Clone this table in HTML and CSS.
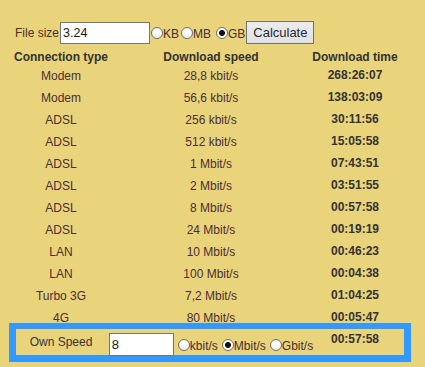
FILE: index.html
```html
<!DOCTYPE html>
<html>
<head>
<meta charset="utf-8">
<link rel="stylesheet" href="styles.css">
</head>
<body>
<form class="size-form">
  <span class="lbl">File size</span><input class="txt size-input" type="text" value="3.24"><input class="radio r1" type="radio" name="u"><span class="opt">KB</span><input class="radio r2" type="radio" name="u"><span class="opt">MB</span><input class="radio r3" type="radio" name="u" checked><span class="opt">GB</span><button type="button" class="btn">Calculate</button>
</form>
<div class="table">
  <div class="row head"><div class="cell">Connection type</div><div class="cell">Download speed</div><div class="cell">Download time</div></div>
  <div class="row"><div class="cell">Modem</div><div class="cell">28,8 kbit/s</div><div class="cell time">268:26:07</div></div>
  <div class="row"><div class="cell">Modem</div><div class="cell">56,6 kbit/s</div><div class="cell time">138:03:09</div></div>
  <div class="row"><div class="cell">ADSL</div><div class="cell">256 kbit/s</div><div class="cell time">30:11:56</div></div>
  <div class="row"><div class="cell">ADSL</div><div class="cell">512 kbit/s</div><div class="cell time">15:05:58</div></div>
  <div class="row"><div class="cell">ADSL</div><div class="cell">1 Mbit/s</div><div class="cell time">07:43:51</div></div>
  <div class="row"><div class="cell">ADSL</div><div class="cell">2 Mbit/s</div><div class="cell time">03:51:55</div></div>
  <div class="row"><div class="cell">ADSL</div><div class="cell">8 Mbit/s</div><div class="cell time">00:57:58</div></div>
  <div class="row"><div class="cell">ADSL</div><div class="cell">24 Mbit/s</div><div class="cell time">00:19:19</div></div>
  <div class="row"><div class="cell">LAN</div><div class="cell">10 Mbit/s</div><div class="cell time">00:46:23</div></div>
  <div class="row"><div class="cell">LAN</div><div class="cell">100 Mbit/s</div><div class="cell time">00:04:38</div></div>
  <div class="row"><div class="cell">Turbo 3G</div><div class="cell">7,2 Mbit/s</div><div class="cell time">01:04:25</div></div>
  <div class="row"><div class="cell">4G</div><div class="cell">80 Mbit/s</div><div class="cell time">00:05:47</div></div>
  <div class="row own">
    <div class="cell own-label">Own Speed</div>
    <div class="cell own-controls"><div class="group"><input class="txt own-input" type="text" value="8"><input class="radio o1" type="radio" name="s"><span class="opt">kbit/s</span><input class="radio o2" type="radio" name="s" checked><span class="opt">Mbit/s</span><input class="radio o3" type="radio" name="s"><span class="opt">Gbit/s</span></div></div>
    <div class="cell time own-time">00:57:58</div>
  </div>
</div>
</body>
</html>
```
FILE: styles.css
```css
html, body {
  background: #e9d37b;
}
body {
  margin: 8px;
  font-family: "Liberation Sans", Arial, sans-serif;
  font-size: 12px;
  color: #4b2f2f;
}
.size-form {
  display: flex;
  align-items: center;
  margin: 13px 0 0 7px;
  height: 23px;
}
.lbl {
  margin-right: 1px;
  white-space: nowrap;
}
.txt {
  box-sizing: border-box;
  border: 1px solid #767676;
  background: #fff;
  font-family: "Liberation Sans", Arial, sans-serif;
  font-size: 12.5px;
  color: #1a1a1a;
  padding: 0 2px;
  margin: 0;
  outline: none;
}
.size-input {
  width: 90px;
  height: 22px;
}
.radio {
  -webkit-appearance: none;
  appearance: none;
  box-sizing: border-box;
  width: 12px;
  height: 12px;
  border: 1px solid #6f6f6f;
  border-radius: 50%;
  background: radial-gradient(circle at 50% 35%, #ffffff 0, #f4f4f4 60%, #e2e2e2 100%);
  margin: 0;
  flex: none;
}
.radio:checked {
  background: radial-gradient(circle, #111 0 2.6px, #fff 3.3px);
}
.opt {
  white-space: nowrap;
  margin-top: 2px;
}
.r1 { margin-left: 1px; }
.r2 { margin-left: 2px; }
.r3 { margin-left: 5px; }
.btn {
  margin-left: 1px;
  height: 23px;
  width: 68px;
  padding: 0;
  border: 1px solid #707070;
  background: linear-gradient(#ececec, #e1e1e1);
  font-family: "Liberation Sans", Arial, sans-serif;
  font-size: 13px;
  color: #1f2a3a;
}
.table {
  margin: 4px 0 0 8px;
  width: 388px;
}
.row {
  display: grid;
  grid-template-columns: 90px 210px 78px;
  height: 22px;
}
.row.head {
  height: 17px;
  font-weight: bold;
  color: #333;
}
.cell {
  display: flex;
  align-items: center;
  justify-content: center;
  white-space: nowrap;
}
.time {
  font-weight: bold;
  color: #333;
  padding-bottom: 3px;
}
.row.own {
  position: relative;
  height: 26px;
  margin: -6px -7px 0;
  border-style: solid;
  border-color: #3399ff;
  border-width: 6px 7px 7px;
}
.own-label {
  color: #3a3434;
}
.own-controls {
  align-items: flex-end;
}
.group {
  display: flex;
  align-items: center;
  margin-bottom: -1px;
}
.own-input {
  width: 65px;
  height: 23px;
  font-size: 13px;
}
.o1 { margin-left: 4px; }
.o2 { margin-left: 4px; }
.o3 { margin-left: 4px; }
.own-time {
  padding-bottom: 7px;
}
```
